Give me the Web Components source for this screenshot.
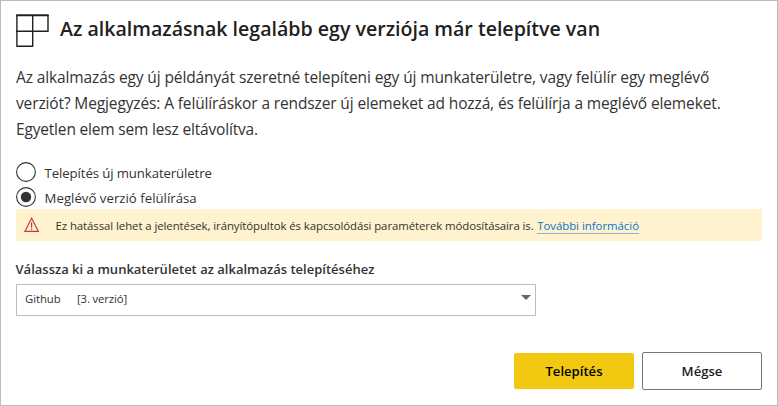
<!DOCTYPE html>
<html lang="hu"><head><meta charset="utf-8"><title>Telepítés</title>
<style>html,body{margin:0;height:100%;background:#fff}body{font-family:"Open Sans","Noto Sans",sans-serif;color:#333}</style></head>
<body>
<install-dialog>
  <dialog-title slot="title">Az alkalmazásnak legalább egy verziója már telepítve van</dialog-title>
  <dialog-copy slot="copy">
    <copy-line style="--track:-.116px">Az alkalmazás egy új példányát szeretné telepíteni egy új munkaterületre, vagy felülír egy meglévő</copy-line>
    <copy-line style="--track:-.128px">verziót? Megjegyzés: A felülíráskor a rendszer új elemeket ad hozzá, és felülírja a meglévő elemeket.</copy-line>
    <copy-line style="--track:-.18px">Egyetlen elem sem lesz eltávolítva.</copy-line>
  </dialog-copy>
  <radio-option slot="options" style="--track:-.1px">Telepítés új munkaterületre</radio-option>
  <radio-option slot="options" checked style="--track:.02px">Meglévő verzió felülírása</radio-option>
  <warning-banner slot="warning">Ez hatással lehet a jelentések, irányítópultok és kapcsolódási paraméterek módosításaira is.<text-link slot="link">További információ</text-link></warning-banner>
  <workspace-select slot="field"><span slot="label">Válassza ki a munkaterületet az alkalmazás telepítéséhez</span><span slot="name">Github</span><span slot="version">[3. verzió]</span></workspace-select>
  <action-button slot="actions" primary>Telepítés</action-button>
  <action-button slot="actions">Mégse</action-button>
</install-dialog>
<script>
const define=(name,html)=>customElements.define(name,class extends HTMLElement{
  constructor(){super();this.attachShadow({mode:'open'}).innerHTML=html}
});
define('install-dialog',`<style>
:host{display:flex;flex-direction:column;box-sizing:border-box;width:778px;height:406px;border:1px solid #bdbdbd;padding:12px 15px 15px;background:#fff}
.options{display:flex;flex-direction:column;gap:5px;margin-top:20px}
.warning{margin-top:2px}.field{margin-top:17px}
.actions{display:flex;align-items:center;justify-content:flex-end;gap:8px;margin-top:auto}
</style><slot name="title"></slot><slot name="copy"></slot><div class="options"><slot name="options"></slot></div><div class="warning"><slot name="warning"></slot></div><div class="field"><slot name="field"></slot></div><div class="actions"><slot name="actions"></slot></div>`);
define('dialog-title',`<style>
:host{display:flex;gap:11px;height:34px;font-size:19.6px;font-weight:600;line-height:26px;letter-spacing:-.01px;color:#212121;white-space:nowrap}
svg{display:block;flex:none;margin:1px 0 0}span{padding-top:3px}
</style><svg width="33" height="33" fill="none" stroke="#212121"><path stroke-width="1.4" d="M.9 1V32.2H16.7M16.7 1V32.9M32 1V17.2M0 17.2H32.7"/><path stroke-width="2" d="M.2 1.2H32.7"/></svg><span><slot></slot></span>`);
define('dialog-copy',`<style>:host{display:flex;flex-direction:column;margin-top:17px;height:78px}</style><slot></slot>`);
define('copy-line',`<style>:host{display:block;font-size:15.5px;line-height:26px;white-space:nowrap;letter-spacing:var(--track,0)}</style><slot></slot>`);
define('radio-option',`<style>
:host{display:flex;gap:8.6px;height:20px;font-size:13.2px;line-height:22px;letter-spacing:var(--track,0);white-space:nowrap}
svg{display:block;flex:none}.dot{display:none}:host([checked]) .dot{display:block}
</style><svg width="20" height="20"><circle cx="10" cy="10" r="9.4" fill="#fff" stroke="#333" stroke-width="1.1"/><circle class="dot" cx="10" cy="10" r="5.2" fill="#333"/></svg><span><slot></slot></span>`);
define('warning-banner',`<style>
:host{display:flex;height:32px;padding-left:8px;background:#fff2ce;font-size:11.4px;line-height:33px;letter-spacing:-.07px;white-space:nowrap}
svg{display:block;flex:none;margin:8px 15.5px 0 0}.link{margin-left:3.5px}
</style><svg width="16" height="16" fill="none" stroke="#c8362f"><path stroke-width="1.1" d="M7.6 1.2 14.4 14.4H.9Z"/><path stroke-width="1.2" d="M7.6 5.3V10.8M7.6 11.8V13"/></svg><span><slot></slot></span><span class="link"><slot name="link"></slot></span>`);
define('text-link',`<style>:host{display:block;width:102px;height:15px;margin-top:9px;line-height:15px;border-bottom:1px solid #8eb5d6;color:#0b74cb;letter-spacing:-.02px}</style><slot></slot>`);
define('workspace-select',`<style>
:host{display:block;white-space:nowrap}.label{font-size:13px;font-weight:600;line-height:22px;height:26px;margin-left:-.5px}
.box{display:flex;box-sizing:border-box;width:520px;height:32px;border:1px solid #bdbdbd;padding:0 4px 0 8px;font-size:11.3px;line-height:28px}
.name{width:52px;letter-spacing:-.04px}.version{letter-spacing:-.12px}svg{margin:10px 0 0 auto}
</style><div class="label"><slot name="label"></slot></div><div class="box"><span class="name"><slot name="name"></slot></span><span class="version"><slot name="version"></slot></span><svg width="10" height="5"><path fill="#666" d="M0 0H10L5 5Z"/></svg></div>`);
define('action-button',`<style>
:host{display:flex;align-items:center;justify-content:center;box-sizing:border-box;width:120px;height:38px;border:1px solid #777;border-radius:2px;font-size:13.1px;font-weight:600;line-height:20px;color:#212121}
:host([primary]){height:36px;border:0;background:#f2c811;color:#000}
</style><slot></slot>`);
</script></body></html>
